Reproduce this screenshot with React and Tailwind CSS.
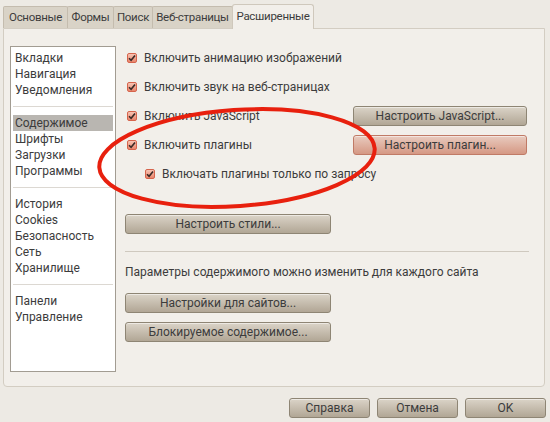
import React from 'react';

const font = { fontFamily: 'Roboto, "Noto Sans", sans-serif' };

const Check = ({ indent }) => (
  <span className={`w-[10px] h-[10px] shrink-0 rounded-[2px] border border-[#d6644c] bg-gradient-to-b from-[#f6c3b3] to-[#e8856c] flex items-center justify-center ${indent ? 'ml-[20px]' : 'ml-[2px]'}`}>
    <svg width="8" height="8" viewBox="0 0 8 8">
      <path d="M1 4.2 L3.1 6.3 L7 1.4" fill="none" stroke="#3a2a26" strokeWidth="1.6" />
    </svg>
  </span>
);

const Btn = ({ children, className = '', hot }) => (
  <div
    className={`h-[20px] flex items-center justify-center rounded-[3px] border text-[12px] text-[#3c3c3c] shadow-[inset_0_1px_0_rgba(255,255,255,0.5)] ${
      hot
        ? 'border-[#c07a66] bg-gradient-to-b from-[#e8cbbf] to-[#d59884]'
        : 'border-[#8e8574] bg-gradient-to-b from-[#dbd4c8] to-[#b1a695]'
    } ${className}`}
  >
    {children}
  </div>
);

const Row = ({ label, indent, children }) => (
  <div className="h-[20px] flex items-center">
    <Check indent={indent} />
    <span className="ml-[7px] text-[12px] text-[#3c3c3c] whitespace-nowrap">{label}</span>
    <div className="flex-1" />
    {children}
  </div>
);

export default function App() {
  const tabs = [
    { t: 'Основные', w: 'w-[65px]' },
    { t: 'Формы', w: 'w-[47px]' },
    { t: 'Поиск', w: 'w-[40px]' },
    { t: 'Веб-страницы', w: 'w-[81px]' },
  ];
  const groups = [
    ['Вкладки', 'Навигация', 'Уведомления'],
    ['Содержимое', 'Шрифты', 'Загрузки', 'Программы'],
    ['История', 'Cookies', 'Безопасность', 'Сеть', 'Хранилище'],
    ['Панели', 'Управление'],
  ];

  return (
    <div className="relative w-[550px] h-[422px] bg-[#edeae4] overflow-hidden text-[#3c3c3c]" style={font}>
      {/* Tabs */}
      <div className="flex items-end pl-[3px] pt-[3px] h-[28px]">
        {tabs.map(({ t, w }) => (
          <div
            key={t}
            className={`${w} h-[22px] flex items-center justify-center whitespace-nowrap text-[11.5px] tracking-[-0.3px] bg-[#d9d3c7] border border-b-0 border-[#c4bcae] rounded-t-[2px] -mr-px`}
          >
            {t}
          </div>
        ))}
        <div className="w-[82px] h-[25px] flex items-center justify-center whitespace-nowrap text-[11.5px] tracking-[-0.3px] bg-[#f2efea] border border-b-0 border-[#cfc8bc] rounded-t-[3px] relative z-10 -mb-px">
          Расширенные
        </div>
      </div>

      {/* Panel */}
      <div className="mx-[3px] w-[542px] h-[359px] bg-[#f2efea] border border-[#d3cdc2] rounded-b-[4px] flex pt-[17px] pl-[6px]">
        {/* List */}
        <div className="w-[106px] h-[326px] bg-white border border-[#a29c92] pt-[3px] px-[2px]">
          {groups.map((g, gi) => (
            <div key={gi}>
              {gi > 0 && <div className="h-px bg-[#dcd8d2] my-[8px]" />}
              {g.map((item) => (
                <div
                  key={item}
                  className={`h-[16px] flex items-center pl-[2px] text-[12px] ${
                    item === 'Содержимое' ? 'bg-[#b9b6b1]' : ''
                  }`}
                >
                  {item}
                </div>
              ))}
            </div>
          ))}
        </div>

        {/* Content */}
        <div className="ml-[9px] w-[404px] flex flex-col pt-[2px]">
          <div className="flex flex-col gap-[9px]">
            <Row label="Включить анимацию изображений" />
            <Row label="Включить звук на веб-страницах" />
            <Row label="Включить JavaScript">
              <Btn className="w-[174px] mr-[2px]">Настроить JavaScript...</Btn>
            </Row>
            <Row label="Включить плагины">
              <Btn hot className="w-[174px] mr-[2px]">Настроить плагин...</Btn>
            </Row>
            <Row label="Включать плагины только по запросу" indent />
          </div>

          <Btn className="w-[206px] mt-[30px]">Настроить стили...</Btn>

          <div className="h-px bg-[#cfc9bf] mt-[17px]" />

          <div className="mt-[12px] h-[16px] flex items-center text-[12px] whitespace-nowrap">
            Параметры содержимого можно изменить для каждого сайта
          </div>

          <Btn className="w-[206px] mt-[13px]">Настройки для сайтов...</Btn>
          <Btn className="w-[206px] mt-[9px]">Блокируемое содержимое...</Btn>
        </div>
      </div>

      {/* Dialog buttons */}
      <div className="flex justify-end gap-[7px] pr-[4px] mt-[11px]">
        <Btn className="w-[81px]">Справка</Btn>
        <Btn className="w-[81px]">Отмена</Btn>
        <Btn className="w-[81px]">OK</Btn>
      </div>

      {/* Red annotation ellipse */}
      <svg className="absolute left-0 top-0 pointer-events-none" width="550" height="422">
        <ellipse
          cx="237"
          cy="158"
          rx="138"
          ry="48"
          transform="rotate(-4 237 158)"
          fill="none"
          stroke="#e8200e"
          strokeWidth="4"
        />
      </svg>
    </div>
  );
}
